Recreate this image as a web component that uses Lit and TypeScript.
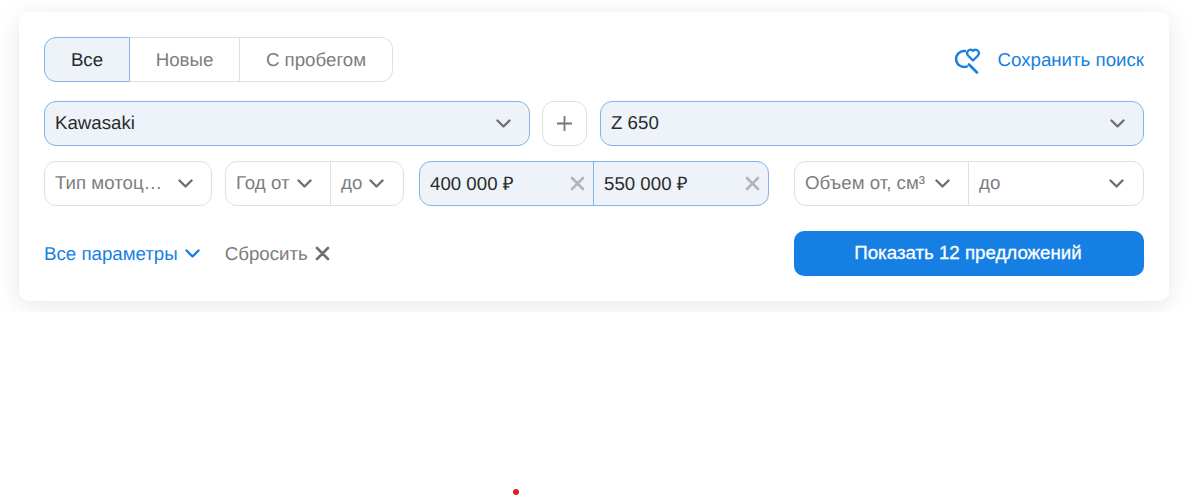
import {LitElement, html, css, svg} from 'lit';
import {customElement} from 'lit/decorators.js';

const chevron = (color = '#6f6f6f') => html`
  <svg class="chev" width="15" height="9" viewBox="0 0 15 9" fill="none">
    <path d="M1.5 1.5l6 6 6-6" stroke=${color} stroke-width="2.4" stroke-linecap="round" stroke-linejoin="round"/>
  </svg>`;

const cross = (color: string) => html`
  <svg class="cross" width="15" height="15" viewBox="0 0 15 15" fill="none">
    <path d="M2 2l11 11M13 2L2 13" stroke=${color} stroke-width="2.6" stroke-linecap="round"/>
  </svg>`;

const saveIcon = svg`
  <path d="M11 6A8 8 0 1 0 13 21.4" stroke="#167fe3" stroke-width="2.4" stroke-linecap="round"/>
  <path d="M15 19.5l8 8" stroke="#167fe3" stroke-width="2.6" stroke-linecap="round"/>
  <path d="M19 15.5l-5-5a3.4 3.4 0 0 1 4.8-4.8l.2.2.2-.2a3.4 3.4 0 0 1 4.8 4.8z" stroke="#167fe3" stroke-width="2.2" stroke-linejoin="round"/>
`;

@customElement('app-root')
export class AppRoot extends LitElement {
  static styles = css`
    :host {
      display: block;
      position: relative;
      height: 496px;
      background: #fff;
      font-family: 'Liberation Sans', Arial, sans-serif;
      font-size: 18.7px;
      text-rendering: geometricPrecision;
      color: #2a2a2a;
    }

    .clip {
      height: 312px;
      box-sizing: border-box;
      padding: 12px 22px 0 19px;
      overflow: hidden;
    }

    .card {
      height: 289px;
      box-sizing: border-box;
      padding: 25px;
      background: #fff;
      border-radius: 10px;
      box-shadow: 0 4px 24px rgba(0, 0, 0, 0.1);
    }

    .row {
      display: flex;
      align-items: center;
    }

    .row.first, .row.last { justify-content: space-between; }
    .row.second { margin-top: 19px; gap: 12px; }
    .row.third { margin-top: 15px; }
    .row.last { margin-top: 25px; }

    .group {
      display: flex;
      height: 45px;
      box-sizing: border-box;
      border: 1px solid #e0e0e0;
      border-radius: 12px;
      background: #fff;
      color: #7d7d7d;
      overflow: hidden;
    }

    .group.active {
      border-color: #7fb4ea;
      background: #eef3fa;
      color: #2a2a2a;
    }

    .cell {
      display: flex;
      align-items: center;
      justify-content: space-between;
      box-sizing: border-box;
      padding: 0 18px 1px 10px;
      white-space: nowrap;
    }

    .cell + .cell { border-left: 1px solid #e0e0e0; }
    .active .cell + .cell { border-left-color: #7fb4ea; }
    .cell.clear { padding-right: 8px; }
    .cell.tight { padding-right: 19px; }
    .cell .chev { margin-top: 1px; }

    .tabs { display: flex; width: 349px; height: 45px; }

    .tab {
      display: flex;
      align-items: center;
      justify-content: center;
      box-sizing: border-box;
      border: 1px solid #e0e0e0;
      border-left: none;
      color: #7d7d7d;
    }

    .tab.on {
      width: 86px;
      border: 1px solid #7fb4ea;
      border-radius: 12px 0 0 12px;
      background: #eef3fa;
      color: #2a2a2a;
    }

    .tab.mid { width: 110px; }
    .tab.end { flex: 1; border-radius: 0 12px 12px 0; }

    .plus {
      display: flex;
      align-items: center;
      justify-content: center;
      width: 45px;
      height: 45px;
      box-sizing: border-box;
      border: 1px solid #e0e0e0;
      border-radius: 12px;
    }

    .link {
      display: flex;
      align-items: center;
      color: #167fe3;
      white-space: nowrap;
    }

    .save svg { margin-right: 14px; }
    .params .chev { margin-left: 7px; }
    .reset { margin-left: 25px; color: #7d7d7d; }
    .reset .cross { margin-left: 7px; }

    .left { display: flex; align-items: center; }

    .show {
      width: 350px;
      height: 45px;
      padding: 0 2px 1px 0;
      border: none;
      border-radius: 10px;
      background: #167fe3;
      color: #fff;
      font: inherit;
      -webkit-text-stroke: 0.3px #fff;
    }

    .dot {
      position: absolute;
      left: 513px;
      top: 489px;
      width: 6px;
      height: 6px;
      border-radius: 50%;
      background: #e01b24;
    }
  `;

  render() {
    return html`
      <div class="clip">
        <div class="card">
          <div class="row first">
            <div class="tabs">
              <div class="tab on">Все</div>
              <div class="tab mid">Новые</div>
              <div class="tab end">С пробегом</div>
            </div>
            <div class="link save">
              <svg width="29" height="29" viewBox="0 0 29 29" fill="none">${saveIcon}</svg>
              Сохранить поиск
            </div>
          </div>

          <div class="row second">
            <div class="group active" style="width:486px">
              <div class="cell" style="flex:1">Kawasaki ${chevron()}</div>
            </div>
            <div class="plus">
              <svg width="17" height="17" viewBox="0 0 17 17" fill="none">
                <path d="M8.5 1v15M1 8.5h15" stroke="#777" stroke-width="1.8"/>
              </svg>
            </div>
            <div class="group active" style="width:544px; margin-left:1px">
              <div class="cell" style="flex:1">Z 650 ${chevron()}</div>
            </div>
          </div>

          <div class="row third">
            <div class="group" style="width:168px; margin-right:13px">
              <div class="cell" style="flex:1">Тип мотоц… ${chevron()}</div>
            </div>
            <div class="group" style="width:179px; margin-right:15px">
              <div class="cell" style="width:104px">Год от ${chevron()}</div>
              <div class="cell tight" style="flex:1">до ${chevron()}</div>
            </div>
            <div class="group active" style="width:350px; margin-right:25px">
              <div class="cell clear" style="width:173px">400 000 ₽ ${cross('#b4b4b4')}</div>
              <div class="cell clear" style="flex:1">550 000 ₽ ${cross('#b4b4b4')}</div>
            </div>
            <div class="group" style="width:350px">
              <div class="cell" style="width:173px">Объем от, см³ ${chevron()}</div>
              <div class="cell tight" style="flex:1">до ${chevron()}</div>
            </div>
          </div>

          <div class="row last">
            <div class="left">
              <div class="link params">Все параметры ${chevron('#167fe3')}</div>
              <div class="link reset">Сбросить ${cross('#6f6f6f')}</div>
            </div>
            <button class="show">Показать 12 предложений</button>
          </div>
        </div>
      </div>
      <div class="dot"></div>
    `;
  }
}
